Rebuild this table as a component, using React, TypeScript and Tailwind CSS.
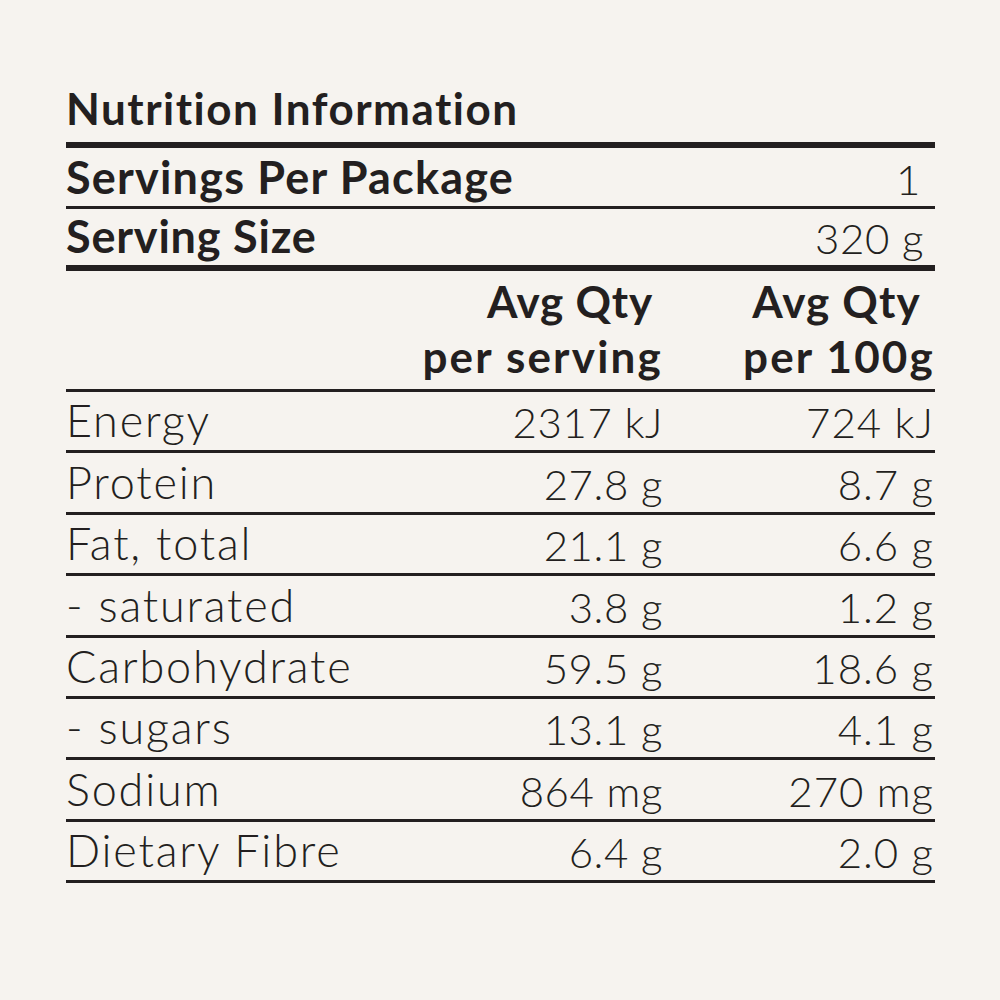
const ROWS = [
  { label: 'Energy', serving: '2317 kJ', per100: '724 kJ' },
  { label: 'Protein', serving: '27.8 g', per100: '8.7 g' },
  { label: 'Fat, total', serving: '21.1 g', per100: '6.6 g' },
  { label: '- saturated', serving: '3.8 g', per100: '1.2 g' },
  { label: 'Carbohydrate', serving: '59.5 g', per100: '18.6 g' },
  { label: '- sugars', serving: '13.1 g', per100: '4.1 g' },
  { label: 'Sodium', serving: '864 mg', per100: '270 mg' },
  { label: 'Dietary Fibre', serving: '6.4 g', per100: '2.0 g' },
];

export default function App() {
  return (
    <div
      className="min-h-screen bg-[#f6f3ef] text-[#231f20]"
      style={{ fontFamily: 'Lato, "Open Sans", sans-serif' }}
    >
      <div className="ml-[66px] w-[869px]">
        <h1 className="flex h-[142px] items-end pb-[12px] text-[44px] font-bold leading-none tracking-[1.5px]">
          Nutrition Information
        </h1>

        <div className="h-[6px] bg-[#231f20]" />

        {/* servings */}
        <div className="flex h-[61px] items-end justify-between border-b-[3px] border-[#231f20] pb-[6px] leading-none">
          <span className="text-[45px] font-bold tracking-[1.2px]">Servings Per Package</span>
          <span className="pr-[14px] text-[42px] font-light tracking-[0.6px]">1</span>
        </div>
        <div className="flex h-[62px] items-end justify-between border-b-[6px] border-[#231f20] pb-[6px] leading-none">
          <span className="text-[45px] font-bold tracking-[0.8px]">Serving Size</span>
          <span className="pr-[11px] text-[42px] font-light tracking-[0.6px]">320 g</span>
        </div>

        {/* column headings */}
        <div className="grid h-[121px] grid-cols-[1fr_280px_272px] border-b-[3px] border-[#231f20] pt-[3px] text-[44px] font-bold leading-[55px] tracking-[2.2px]">
          <div />
          <div className="text-right">
            <div className="pr-[10px] tracking-[0.8px]">Avg Qty</div>
            <div>per serving</div>
          </div>
          <div className="text-right">
            <div className="pr-[14px] tracking-[1.2px]">Avg Qty</div>
            <div>per 100g</div>
          </div>
        </div>

        {ROWS.map((r) => (
          <div
            key={r.label}
            className="grid h-[61.4px] grid-cols-[1fr_280px_272px] items-end border-b-[3px] border-[#231f20] pb-[7px] font-light leading-none"
          >
            <span className="text-[45px] tracking-[1.8px]">{r.label}</span>
            <span className="text-right text-[42px] tracking-[0.6px]">{r.serving}</span>
            <span className="pr-[1px] text-right text-[42px] tracking-[1px]">{r.per100}</span>
          </div>
        ))}
      </div>
    </div>
  );
}
